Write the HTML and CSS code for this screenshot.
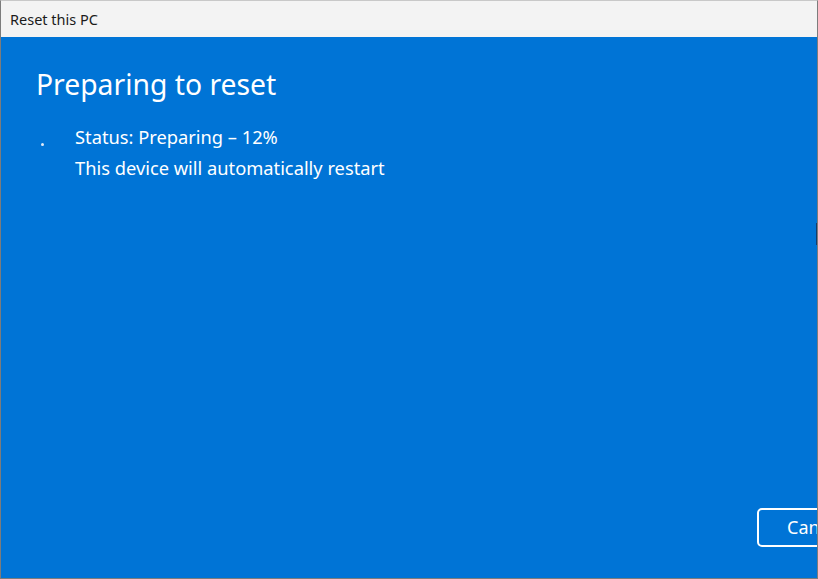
FILE: index.html
```html
<!DOCTYPE html>
<html lang="en">
<head>
<meta charset="utf-8">
<title>Reset this PC</title>
<link rel="stylesheet" href="styles.css">
</head>
<body>
<div class="window">
  <div class="titlebar">Reset this PC</div>
  <div class="content">
    <h1 class="heading">Preparing to reset</h1>
    <div class="status">
      <div class="spinner"><span class="dot"></span></div>
      <div class="lines">
        <p class="line">Status: Preparing – 12%</p>
        <p class="line">This device will automatically restart</p>
      </div>
    </div>
    <div class="footer">
      <button class="btn">Cancel</button>
    </div>
    <span class="edge"></span>
  </div>
</div>
</body>
</html>
```
FILE: styles.css
```css
html, body {
  margin: 0;
  padding: 0;
  background: #ffffff;
}
.window {
  width: 818px;
  height: 579px;
  box-sizing: border-box;
  border: 1px solid #7c7c7c;
  border-top-color: #c8c8c8;
  display: flex;
  flex-direction: column;
  overflow: hidden;
  font-family: "Segoe UI", "Noto Sans", "Open Sans", sans-serif;
}
.titlebar {
  height: 36px;
  flex: none;
  background: #f3f3f3;
  color: #1b1b1b;
  font-size: 14.5px;
  padding-left: 9px;
  display: flex;
  align-items: center;
  padding-bottom: 1px;
  box-sizing: border-box;
}
.content {
  position: relative;
  flex: 1;
  background: #0074d6;
  color: #ffffff;
  display: flex;
  flex-direction: column;
  padding: 27px 0 31px 35px;
}
.heading {
  margin: 0;
  font-size: 28.3px;
  font-weight: 400;
  line-height: 40px;
}
.status {
  display: flex;
  margin-top: 17px;
}
.spinner {
  width: 39px;
  position: relative;
}
.dot {
  position: absolute;
  left: 5px;
  top: 22px;
  width: 3px;
  height: 3px;
  border-radius: 50%;
  background: #dfeaf7;
}
.lines {
  display: flex;
  flex-direction: column;
}
.line {
  margin: 0;
  font-size: 18.3px;
  line-height: 31px;
}
.footer {
  margin-top: auto;
  display: flex;
}
.btn {
  margin-left: 721px;
  flex: none;
  width: 120px;
  height: 39px;
  box-sizing: border-box;
  border: 2px solid #ffffff;
  border-radius: 5px;
  background: transparent;
  color: #ffffff;
  font-family: inherit;
  font-size: 18px;
  text-align: left;
  padding: 0 0 2px 28px;
}
.edge {
  position: absolute;
  right: 0;
  top: 186px;
  width: 1px;
  height: 22px;
  background: #163b6b;
}
```
